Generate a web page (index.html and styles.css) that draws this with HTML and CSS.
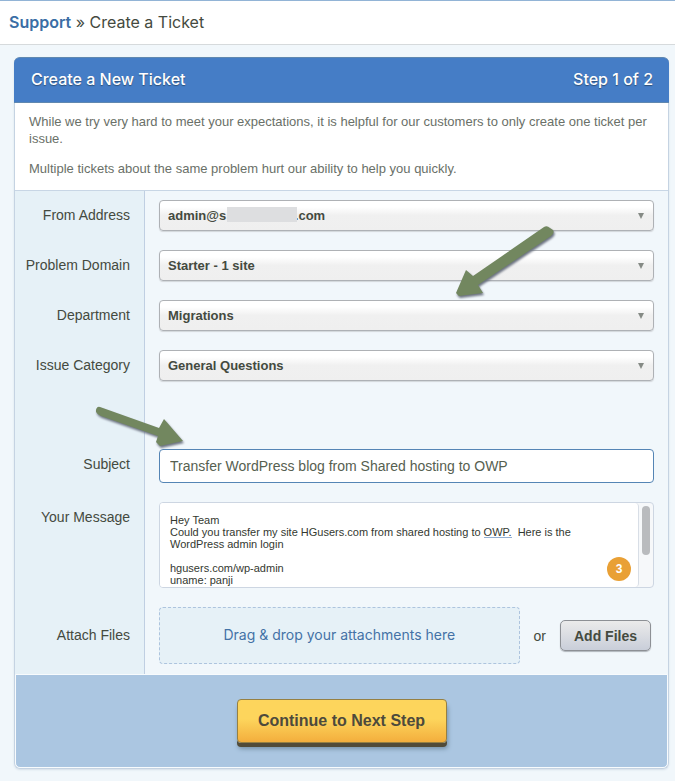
FILE: index.html
```
<!DOCTYPE html>
<html lang="en">
<head>
    <meta charset="utf-8">
    <meta name="viewport" content="width=device-width, initial-scale=1">
    <title>Create a Ticket</title>
    <link rel="stylesheet" href="styles.css">
</head>

<body>
    <nav class="breadcrumb">
        <a href="#">Support</a> » Create a Ticket
    </nav>

    <form class="ticket">
        <div class="ticket-header">
            <h1>Create a New Ticket</h1>
            <span>Step 1 of 2</span>
        </div>

        <div class="intro">
            <p>While we try very hard to meet your expectations, it is helpful for our customers to only create one ticket per issue.</p>
            <p>Multiple tickets about the same problem hurt our ability to help you quickly.</p>
        </div>

        <div class="row">
            <div class="label-cell"><label for="from">From Address</label></div>
            <div class="field-cell">
                <div class="select">
                    <select id="from">
                        <option>admin@s&nbsp;&nbsp;&nbsp;&nbsp;&nbsp;&nbsp;&nbsp;&nbsp;&nbsp;&nbsp;&nbsp;&nbsp;&nbsp;&nbsp;&nbsp;&nbsp;&nbsp;&nbsp;&nbsp;.com</option>
                    </select>
                    <span class="redacted"></span>
                </div>
            </div>
        </div>

        <div class="row">
            <div class="label-cell"><label for="domain">Problem Domain</label></div>
            <div class="field-cell">
                <div class="select">
                    <select id="domain">
                        <option>Starter - 1 site</option>
                    </select>
                </div>
            </div>
        </div>

        <div class="row">
            <div class="label-cell"><label for="department">Department</label></div>
            <div class="field-cell">
                <div class="select">
                    <select id="department">
                        <option>Migrations</option>
                    </select>
                </div>
                <svg class="arrow arrow-department" width="104" height="76" viewBox="0 0 104 76">
                    <path d="M4 69 L14 46 L21 52 L92 3 Q95 1 98 4 L101 6 Q103 9 99 12 L26 61 L31 69 L7 72 Z"/>
                </svg>
            </div>
        </div>

        <div class="row">
            <div class="label-cell"><label for="category">Issue Category</label></div>
            <div class="field-cell">
                <div class="select">
                    <select id="category">
                        <option>General Questions</option>
                    </select>
                </div>
            </div>
        </div>

        
        <div class="row row-empty">
            <div class="label-cell"></div>
            <div class="field-cell"></div>
            <svg class="arrow arrow-subject" width="94" height="44" viewBox="0 0 94 44">
                <path d="M7 2 L66 23 L71 14 L90 36 L67 41 L63 37 L65 31 L8 11 Q2 8 3 5 Q4 1 7 2 Z"/>
            </svg>
        </div>

        <div class="row">
            <div class="label-cell"><label for="subject">Subject</label></div>
            <div class="field-cell">
                <input type="text" class="subject" id="subject" value="Transfer WordPress blog from Shared hosting to OWP">
            </div>
        </div>

        <div class="row">
            <div class="label-cell"><label for="message">Your Message</label></div>
            <div class="field-cell">
                <div class="message">
                    <textarea id="message" spellcheck="false">Hey Team
Could you transfer my site HGusers.com from shared hosting to OWP.&nbsp; Here is the
WordPress admin login

hgusers.com/wp-admin
uname: panji</textarea>
                    <div class="scrollbar"><div class="thumb"></div></div>
                    <span class="spelling"></span>
                    <span class="badge">3</span>
                </div>
            </div>
        </div>

        <div class="row">
            <div class="label-cell label-middle"><label for="add-files">Attach Files</label></div>
            <div class="field-cell attach">
                <div class="dropzone">Drag &amp; drop your attachments here</div>
                <span>or</span>
                <button type="button" class="add-files" id="add-files">Add Files</button>
            </div>
        </div>

        <div class="ticket-footer">
            <button type="submit" class="continue">Continue to Next Step</button>
        </div>
    </form>
</body>

</html>
```
FILE: styles.css
```
* {
    box-sizing: border-box;
}
body {
    margin: 0;
    background-color: #f1f7fb;
    color: #444a40;
    font-family: "Liberation Sans", Arial, sans-serif;
    font-size: 14px;
}
.breadcrumb {
    height: 45px;
    padding: 0 9px;
    border-top: 1px solid #92b4d6;
    border-bottom: 1px solid #d6dadc;
    background-color: #fff;
    font-family: Inter, sans-serif;
    font-size: 16px;
    line-height: 42px;
}
.breadcrumb a {
    color: #3a6ea5;
    font-weight: 600;
    text-decoration: none;
}
.ticket {
    margin: 12px 6px 12px 14px;
    border: 1px solid #c5d3e2;
    border-top: 0;
    border-radius: 6px;
    box-shadow: 0 1px 2px #d5dfe8;
}
.ticket-header {
    display: flex;
    justify-content: space-between;
    align-items: center;
    height: 46px;
    margin: 0 -1px;
    padding: 0 16px 3px 17px;
    border-top: 1px solid #6088b0;
    border-bottom: 1px solid #6088b0;
    border-radius: 6px 6px 0 0;
    background-color: #457dc6;
    color: #fff;
    font-family: Inter, sans-serif;
    font-size: 16px;
    font-weight: 500;
    text-shadow: 0 1px 1px #2d5078;
}
.ticket-header h1 {
    margin: 0;
    font-size: 16px;
    font-weight: 500;
}
.intro {
    padding: 10px 14px 13px;
    border-bottom: 1px solid #c8d6e5;
    background-color: #fff;
    color: #6a7068;
    font-size: 13px;
    line-height: 17px;
}
.intro p {
    margin: 0;
}
.intro p + p {
    margin-top: 13px;
}

/* form rows */
.row {
    display: grid;
    grid-template-columns: 130px 1fr;
    position: relative;
}
.row-empty {
    height: 49px;
}
.label-cell {
    padding: 9px 14px 10px 0;
    border-right: 1px solid #c0cfe2;
    background-color: #e6f1f7;
    line-height: 31px;
    text-align: right;
}
.label-middle {
    align-content: center;
}
.field-cell {
    position: relative;
    min-width: 0;
    padding: 9px 14px 10px;
}
.select {
    position: relative;
}
.select::after {
    content: "";
    position: absolute;
    top: 13px;
    right: 10px;
    border: 3px solid transparent;
    border-top: 6px solid #858a85;
    border-bottom: 0;
    pointer-events: none;
}
select {
    display: block;
    appearance: none;
    width: 100%;
    height: 31px;
    padding: 0 8px 1px;
    border: 1px solid #aeb1b5;
    border-radius: 4px;
    background: linear-gradient(#fff 20%, #f0f0f0 50%, #efefef);
    box-shadow: 0 1px 1px #d2d6da;
    color: #444a40;
    font-family: inherit;
    font-size: 13px;
    font-weight: bold;
}
.redacted {
    position: absolute;
    top: 7px;
    left: 68px;
    width: 70px;
    height: 15px;
    background-color: #dddee0;
}
.subject {
    display: block;
    width: 100%;
    height: 34px;
    padding: 0 10px;
    border: 1px solid #5585b5;
    border-radius: 4px;
    outline: none;
    background-color: #fff;
    color: #566050;
    font-family: inherit;
    font-size: 14px;
}

/* message box */
.message {
    display: flex;
    position: relative;
    height: 86px;
    border: 1px solid #cdd6e2;
    border-radius: 4px;
    background-color: #f6f8fa;
    overflow: hidden;
}
.message textarea {
    flex: 1;
    min-width: 0;
    padding: 11px 10px 0;
    border: 0;
    border-right: 1px solid #d8dee6;
    border-radius: 0 4px 4px 0;
    outline: none;
    background-color: #fff;
    color: #333830;
    font-family: inherit;
    font-size: 11px;
    line-height: 12px;
    resize: none;
    overflow: hidden;
}
.scrollbar {
    width: 14px;
    padding: 3px;
}
.thumb {
    height: 49px;
    border-radius: 4px;
    background-color: #b9bbbe;
}
.spelling {
    position: absolute;
    top: 34px;
    left: 324px;
    width: 28px;
    height: 1px;
    background-color: #92afd2;
}
.badge {
    position: absolute;
    right: 22px;
    bottom: 6px;
    width: 24px;
    height: 24px;
    border-radius: 50%;
    background-color: #e9a035;
    color: #fff;
    font-size: 12px;
    font-weight: bold;
    line-height: 24px;
    text-align: center;
}

/* attachments */
.attach {
    display: flex;
    align-items: center;
    gap: 14px;
    padding-right: 17px;
}
.dropzone {
    flex: 1;
    height: 57px;
    border: 1px dashed #adc4de;
    border-radius: 4px;
    background-color: #e6f1f7;
    color: #4472a6;
    font-family: Inter, sans-serif;
    line-height: 54px;
    text-align: center;
}
.add-files {
    width: 91px;
    height: 31px;
    padding: 0;
    border: 1px solid #8d9095;
    border-radius: 5px;
    background: linear-gradient(#ebebeb, #c9ced9);
    box-shadow: 0 1px 1px #b0b5bb;
    color: #444a40;
    font-family: inherit;
    font-size: 14px;
    font-weight: bold;
}
.ticket-footer {
    height: 94px;
    padding-top: 24px;
    border: 1px solid #f8fbfd;
    border-radius: 0 0 5px 5px;
    background-color: #abc6e1;
    text-align: center;
}
.continue {
    width: 210px;
    height: 44px;
    padding: 0;
    border: 1px solid #968043;
    border-radius: 4px;
    background: linear-gradient(#fdd55c 45%, #f3ae3d);
    box-shadow: 0 4px 0 #514b39, 1px 6px 4px #7893a9;
    color: #4d4a3c;
    font-family: inherit;
    font-size: 16px;
    font-weight: bold;
}

/* pointers drawn over the form */
.arrow {
    position: absolute;
    z-index: 1;
    fill: #72875f;
    filter: drop-shadow(1px 2px 1px #6b7280);
    pointer-events: none;
}
.arrow-department {
    top: -67px;
    left: 307px;
}
.arrow-subject {
    top: 14px;
    left: 78px;
}
```
